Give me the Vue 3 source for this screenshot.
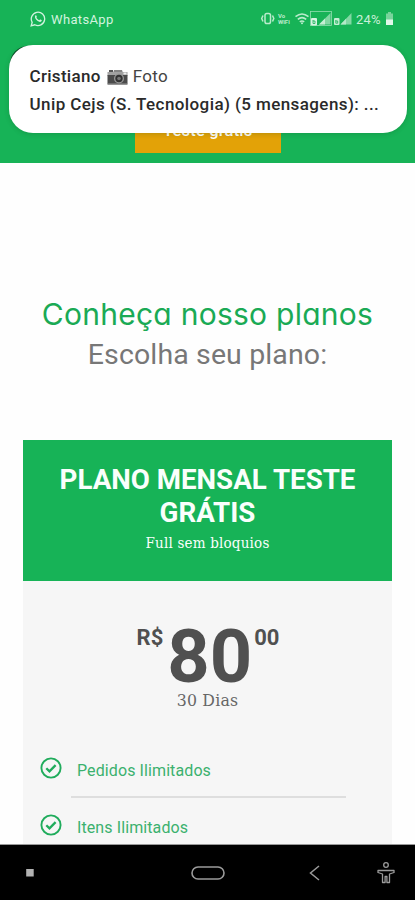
<script setup>
const features = ['Pedidos Ilimitados', 'Itens Ilimitados']
</script>

<template>
  <div class="phone">
    <header class="hero">
      <div class="status">
        <svg class="wa" width="16" height="16" viewBox="0 0 16 16" fill="none" stroke="#d2f3df" stroke-width="1.3">
          <path d="M1.2 14.8 2.2 11.3A6.7 6.7 0 1 1 4.8 13.8Z" />
          <path d="M5.2 4.8c.5-.8 1.1-.6 1.4.3.4.9.1 1-.2 1.5.6 1.3 1.5 2.1 2.8 2.7.6-.8.9-1.1 1.4-.8 1.5.7 1.4.9.8 1.8-1 1.2-2.6.7-4.100-.5C5.500 8.400 4.400 6.500 5.200 4.800Z" fill="#d2f3df" stroke="none" />
        </svg>
        <span class="app-name">WhatsApp</span>
        <svg class="indicators" width="94" height="20" viewBox="0 0 94 20" fill="none" stroke="#baebcc">
          <rect x="5" y="4.500" width="5.500" height="10" rx="1.800" stroke-width="1.500" />
          <path d="M3 6.500 1.700 9.500 3 12.500M12.500 6.500l1.300 3-1.300 3" stroke-width="1.500" />
          <g fill="#baebcc" stroke="none" class="tiny">
            <text x="18" y="9">Vo</text>
            <text x="18" y="14.500">WiFi</text>
          </g>
          <g stroke-width="1.500">
            <path d="M35.500 7.700q6.500-5.400 13 0M37.800 10.400q4.200-3.600 8.400 0M39.800 12.900q2.200-1.800 4.400 0" />
          </g>
          <circle cx="42" cy="14.300" r="1" fill="#baebcc" stroke="none" />
          <rect x="50.500" y="2.500" width="21" height="14" stroke-width=".8" opacity=".75" />
          <rect x="51" y="9" width="6" height="7.500" rx="1" fill="#d8f4e3" stroke="none" />
          <path d="M53 11v3.500h2V12h-2" stroke="#17b357" stroke-width=".8" />
          <path d="M59 15.500 70.500 4v11.500Z" fill="#82d8a3" stroke="none" />
          <path d="M59 15.500 65 9.500v6Z" fill="#c5eed4" stroke="none" />
          <rect x="74" y="9" width="5.500" height="7" rx="1" fill="#c5eed4" stroke="none" />
          <path d="M75.800 11v3.200h1.900V12h-1.900" stroke="#17b357" stroke-width=".8" />
          <path d="M80.500 15.500 91.500 4v11.500Z" fill="#82d8a3" stroke="none" />
          <path d="M80.500 15.500 86 9.700v5.800Z" fill="#b4e9c8" stroke="none" />
        </svg>
        <span class="percent">24%</span>
        <svg class="battery" width="9" height="14" viewBox="0 0 9 14">
          <path d="M3 0h3v1.500h2v11.500H1V1.500h2Z" fill="#78d49b" />
          <path d="M1 7.500h7V13H1Z" fill="#e1f7e9" />
        </svg>
      </div>
      <div class="cta"><span>Teste grátis</span></div>
      <div class="corner"></div>
      <div class="toast">
        <div class="line"><b>Cristiano</b>
          <svg class="camera" width="21" height="17" viewBox="0 0 21 17">
            <rect x="2" y="1" width="4" height="3" fill="#555" />
            <path d="M7 1h8l1 3H6Z" fill="#858585" />
            <rect x=".5" y="3" width="20" height="4" fill="#a2a2a2" />
            <rect x=".5" y="6" width="20" height="9" fill="#4b4b4b" />
            <rect x=".5" y="14.500" width="20" height="1.500" fill="#969696" />
            <circle cx="12" cy="9.500" r="5" fill="#999" />
            <circle cx="12" cy="9.500" r="3.700" fill="#333" />
            <circle cx="12" cy="9.500" r="1.800" fill="#777" />
            <rect x="16.500" y="3.500" width="3" height="2" fill="#eee" />
          </svg>
          <span class="foto">Foto</span>
        </div>
        <div class="line second">Unip Cejs (S. Tecnologia) (5 mensagens): ...</div>
      </div>
    </header>

    <main>
      <h1>Conheça nosso planos</h1>
      <h2>Escolha seu plano:</h2>
      <section class="plan">
        <div class="plan-head">
          <h3>PLANO MENSAL TESTE<br>GRÁTIS</h3>
          <p>Full sem bloquios</p>
        </div>
        <div class="price">
          <span class="currency">R$</span><span class="amount">80</span><span class="cents">00</span>
        </div>
        <p class="period">30 Dias</p>
        <ul>
          <li v-for="item in features" :key="item">
            <svg width="22" height="22" viewBox="0 0 22 22" fill="none" stroke="#20ac5c">
              <circle cx="11" cy="11" r="9.600" stroke-width="1.900" />
              <path d="m6.300 11.200 3.200 3.200 6.100-6.300" stroke-width="2.300" />
            </svg>
            <span>{{ item }}</span>
          </li>
        </ul>
      </section>
    </main>

    <nav>
      <svg width="415" height="55" viewBox="0 0 415 55" fill="none" stroke="#9b9b9b">
        <rect x="26.200" y="24" width="7.500" height="7.500" fill="#b2b2b2" stroke="none" />
        <rect x="192" y="22" width="32" height="12" rx="6" stroke-width="1.600" />
        <path d="m319 21-8.500 7 8.500 7" stroke-width="1.500" />
        <g stroke-width="1.300" stroke-linejoin="round">
          <circle cx="386" cy="20" r="2.300" />
          <path d="M378 25.500h16v2l-4.500 1.500v8.500h-2.600v-6h-1.800v6h-2.600v-8.500l-4.500-1.500Z" />
        </g>
      </svg>
    </nav>
  </div>
</template>

<style>
body { background: #fff; overflow: hidden; }
</style>

<style scoped>
.phone {
  width: 415px;
  height: 900px;
  display: flex;
  flex-direction: column;
  overflow: hidden;
  background: #fefefe;
  font-family: Roboto, "Liberation Sans", sans-serif;
}
h1, h2, h3, p, ul { margin: 0; padding: 0; font-weight: 400; }
.hero { position: relative; flex: none; height: 163px; background: #17b357; }
.status { display: flex; align-items: center; height: 38px; padding-left: 30px; }
.app-name { margin-left: 5px; width: 64px; font-size: 13px; letter-spacing: .35px; color: #d2f3df; }
.indicators { margin-left: 145px; }
.tiny { font-size: 6px; font-weight: 700; }
.percent { margin-left: 2px; width: 25px; font-size: 13px; letter-spacing: .2px; white-space: nowrap; color: #c9f0d8; }
.battery { margin-left: 4px; }
.cta {
  position: absolute;
  left: 134.5px;
  top: 109px;
  width: 146.5px;
  height: 43.5px;
  background: #e3a207;
  color: #fff;
  text-align: center;
  line-height: 43px;
  font-size: 16.5px;
  font-weight: 500;
  letter-spacing: .2px;
}
.corner { position: absolute; left: 10px; top: 46px; width: 40px; height: 40px; border-radius: 18px 0 0 0; background: #0b4d27; }
.toast {
  position: absolute;
  left: 9px;
  top: 45px;
  width: 397.5px;
  height: 88px;
  box-sizing: border-box;
  padding: 17px 0 0 20.5px;
  border-radius: 24px;
  background: #fff;
  box-shadow: 0 1px 5px rgba(0, 60, 20, .2);
  color: #2a2a2a;
  font-size: 17px;
  font-weight: 500;
}
.line { display: flex; align-items: center; height: 28px; white-space: nowrap; letter-spacing: .3px; }
.line b { font-weight: 500; }
.camera { margin: 2px 5px 0 6px; }
.foto { font-weight: 400; color: #444; }
.second { letter-spacing: .41px; }
main { flex: none; height: 681px; overflow: hidden; text-align: center; }
h1 {
  margin-top: 131px;
  height: 40px;
  line-height: 40px;
  font-family: Inter, sans-serif;
  font-feature-settings: "cv11";
  font-size: 30px;
  letter-spacing: .26px;
  white-space: nowrap;
  color: #1aaa55;
}
h2 { height: 40px; line-height: 42px; font-size: 28.5px; letter-spacing: .13px; color: #777; }
.plan { margin: 66px 23px 0; height: 430px; background: #f6f6f6; }
.plan-head { height: 140.5px; box-sizing: border-box; padding-top: 23px; background: #17b357; color: #fafffc; }
h3 { font-size: 27.7px; line-height: 33px; font-weight: 700; }
.plan-head p { margin-top: 3px; line-height: 22px; font-family: "DejaVu Serif Condensed", "DejaVu Serif", serif; font-size: 15px; letter-spacing: .2px; }
.price { display: flex; justify-content: center; align-items: flex-start; height: 67px; padding: 42px 0 0 1px; color: #505050; font-weight: 700; }
.currency, .cents { font-size: 22px; line-height: 30px; }
.amount { margin: 0 2px 0 4px; font-size: 74px; line-height: 67px; }
.period { height: 24px; line-height: 20px; font-family: "DejaVu Serif Condensed", "DejaVu Serif", serif; font-size: 17.5px; letter-spacing: .2px; color: #666; }
ul { margin-top: 43px; list-style: none; }
li { position: relative; display: flex; align-items: center; height: 24px; padding: 0 0 33.500px 17px; font-size: 16px; color: #3bb16e; }
li span { margin-left: 15px; padding-top: 3px; letter-spacing: .1px; }
li svg { margin-top: -2px; }
li:first-child::after { content: ""; position: absolute; left: 48px; bottom: 16px; width: 275px; height: 2px; background: #dedede; }
nav { flex: none; height: 56px; box-sizing: border-box; border-top: 1px solid #999; background: #000; }
nav svg { display: block; }
</style>
